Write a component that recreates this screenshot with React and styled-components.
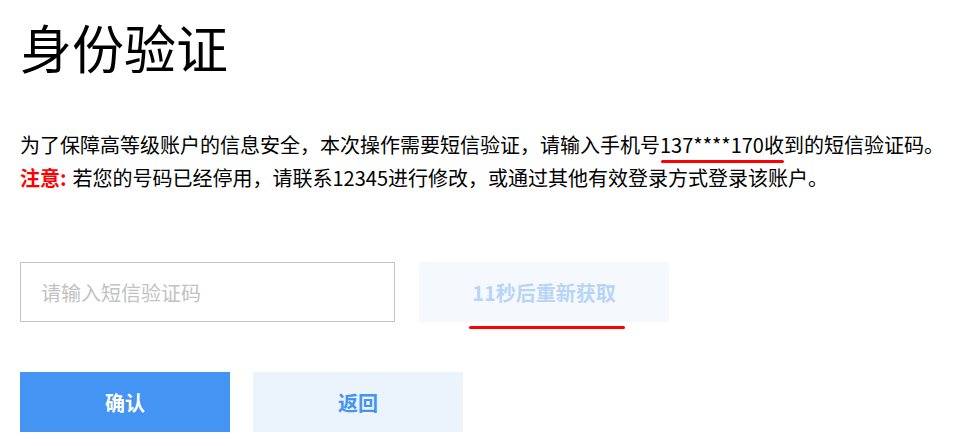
import React from 'react'
import styled, { createGlobalStyle } from 'styled-components'

const GlobalStyle = createGlobalStyle`
  html, body {
    margin: 0;
    padding: 0;
    background: #fff;
  }
  body {
    font-family: "Noto Sans CJK SC", "Noto Sans", sans-serif;
    color: #000;
  }
`

const Page = styled.div`
  padding: 12px 20px 0 20px;
`

const Title = styled.h1`
  margin: 0;
  font-size: 52px;
  line-height: 70px;
  font-weight: 400;
  letter-spacing: 0;
`

const Notice = styled.div`
  margin-top: 46px;
  font-size: 20px;
  line-height: 33px;
  white-space: nowrap;
`

const Warn = styled.span`
  color: #ff0000;
  font-weight: 700;
  margin-right: 6px;
`

const Marked = styled.span`
  position: relative;
  &::after {
    content: '';
    position: absolute;
    left: 1px;
    right: 0;
    bottom: -4px;
    height: 3px;
    border-radius: 2px;
    background: #ff0000;
  }
`

const FormRow = styled.div`
  display: flex;
  gap: 24px;
  margin-top: 68px;
`

const CodeInput = styled.input`
  box-sizing: border-box;
  width: 375px;
  height: 60px;
  border: 1px solid #c4c4c4;
  padding: 0 20px;
  font-family: inherit;
  font-size: 20px;
  outline: none;
  &::placeholder {
    color: #c2c2c2;
  }
`

const Button = styled.button`
  box-sizing: border-box;
  position: relative;
  width: ${p => p.$wide ? '250px' : '210px'};
  height: 60px;
  border: none;
  padding: 0;
  font-family: inherit;
  font-size: 20px;
  font-weight: 700;
  cursor: pointer;
  background: ${p => p.$bg};
  color: ${p => p.$fg};
`

const Resend = styled(Button)`
  cursor: default;
  &::after {
    content: '';
    position: absolute;
    left: 50px;
    width: 156px;
    bottom: -7px;
    height: 3px;
    border-radius: 2px;
    background: #ff0000;
  }
`

const ActionRow = styled.div`
  display: flex;
  gap: 23px;
  margin-top: 50px;
`

export default function App() {
  return (
    <Page>
      <GlobalStyle />
      <Title>身份验证</Title>
      <Notice>
        <div>
          为了保障高等级账户的信息安全，本次操作需要短信验证，请输入手机号<Marked>137****170收</Marked>到的短信验证码。
        </div>
        <div>
          <Warn>注意:</Warn>若您的号码已经停用，请联系12345进行修改，或通过其他有效登录方式登录该账户。
        </div>
      </Notice>
      <FormRow>
        <CodeInput placeholder="请输入短信验证码" />
        <Resend $wide $bg="#f5f9fe" $fg="#b8d5f7" disabled>11秒后重新获取</Resend>
      </FormRow>
      <ActionRow>
        <Button $bg="#4494f3" $fg="#fff">确认</Button>
        <Button $bg="#ebf3fc" $fg="#4494f3">返回</Button>
      </ActionRow>
    </Page>
  )
}
